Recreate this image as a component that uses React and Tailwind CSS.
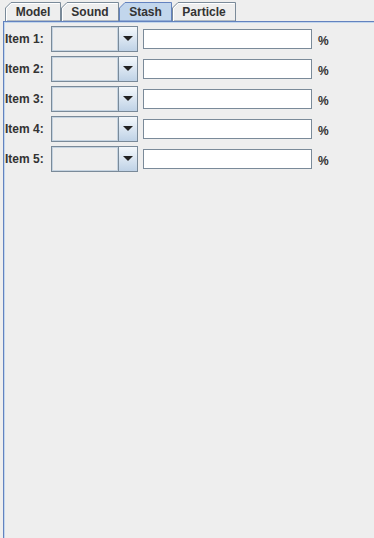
import React from 'react';

// Metal look & feel tabbed pane with five stash rows
const tabs = [
  { label: 'Model', width: 56 },
  { label: 'Sound', width: 58 },
  { label: 'Stash', width: 53, selected: true },
  { label: 'Particle', width: 64 },
];

const items = [1, 2, 3, 4, 5];

function Tab({ label, width, selected }) {
  const h = 19;
  const stroke = selected ? '#6382bf' : '#7a8a99';
  const fill = selected ? '#c2d6ec' : '#eeeeee';
  return (
    <div className="relative flex items-center justify-center" style={{ width }}>
      <svg className="absolute inset-0" width={width} height={h}>
        <polygon
          points={`0.5,${h} 0.5,6 6,0.5 ${width - 0.5},0.5 ${width - 0.5},${h}`}
          fill={fill}
          stroke={stroke}
          strokeWidth="1"
        />
        {!selected && <polyline points={`1.5,${h} 1.5,6.5 6.5,1.5 ${width - 1.5},1.5`} fill="none" stroke="#ffffff" strokeWidth="1" />}
      </svg>
      <span className="relative text-[12px] font-bold text-[#333333] leading-none pt-[1px]">{label}</span>
    </div>
  );
}

function ComboBox() {
  return (
    <div className="flex h-[26px] w-[87px] border border-[#7a8a99] bg-[#eeeeee]">
      <div className="flex-1 border border-[#c5d3e0] bg-[#eeeeee]" />
      <div className="flex w-[19px] items-center justify-center border-l border-[#7a8a99] bg-gradient-to-b from-[#f4f8fc] to-[#bfd2e6]">
        <svg width="10" height="6" viewBox="0 0 10 6">
          <polygon points="0,0 10,0 5,5" fill="#222222" />
        </svg>
      </div>
    </div>
  );
}

export default function App() {
  return (
    <div className="h-[538px] w-[374px] overflow-hidden bg-[#eeeeee] font-['Liberation_Sans',Arial,sans-serif]">
      <div className="flex h-[21px] items-end pl-[5px] pt-[3px]">
        <div className="flex h-[19px]">
          {tabs.map((t) => (
            <Tab key={t.label} {...t} />
          ))}
        </div>
      </div>
      <div className="ml-[3px] h-[517px] border-l border-t border-[#6382bf]">
        <div className="h-full border-l border-t border-[#c2d6ec] pt-[3px]">
          <div className="flex flex-col gap-[4px]">
            {items.map((n) => (
              <div key={n} className="flex h-[26px] items-center">
                <span className="w-[46px] text-[12px] font-bold text-[#333333]">Item {n}:</span>
                <ComboBox />
                <div className="ml-[5px] h-[20px] w-[169px] border border-[#7a8a99] bg-white" />
                <span className="ml-[6px] pt-[3px] text-[12px] font-bold text-[#333333]">%</span>
              </div>
            ))}
          </div>
        </div>
      </div>
    </div>
  );
}
